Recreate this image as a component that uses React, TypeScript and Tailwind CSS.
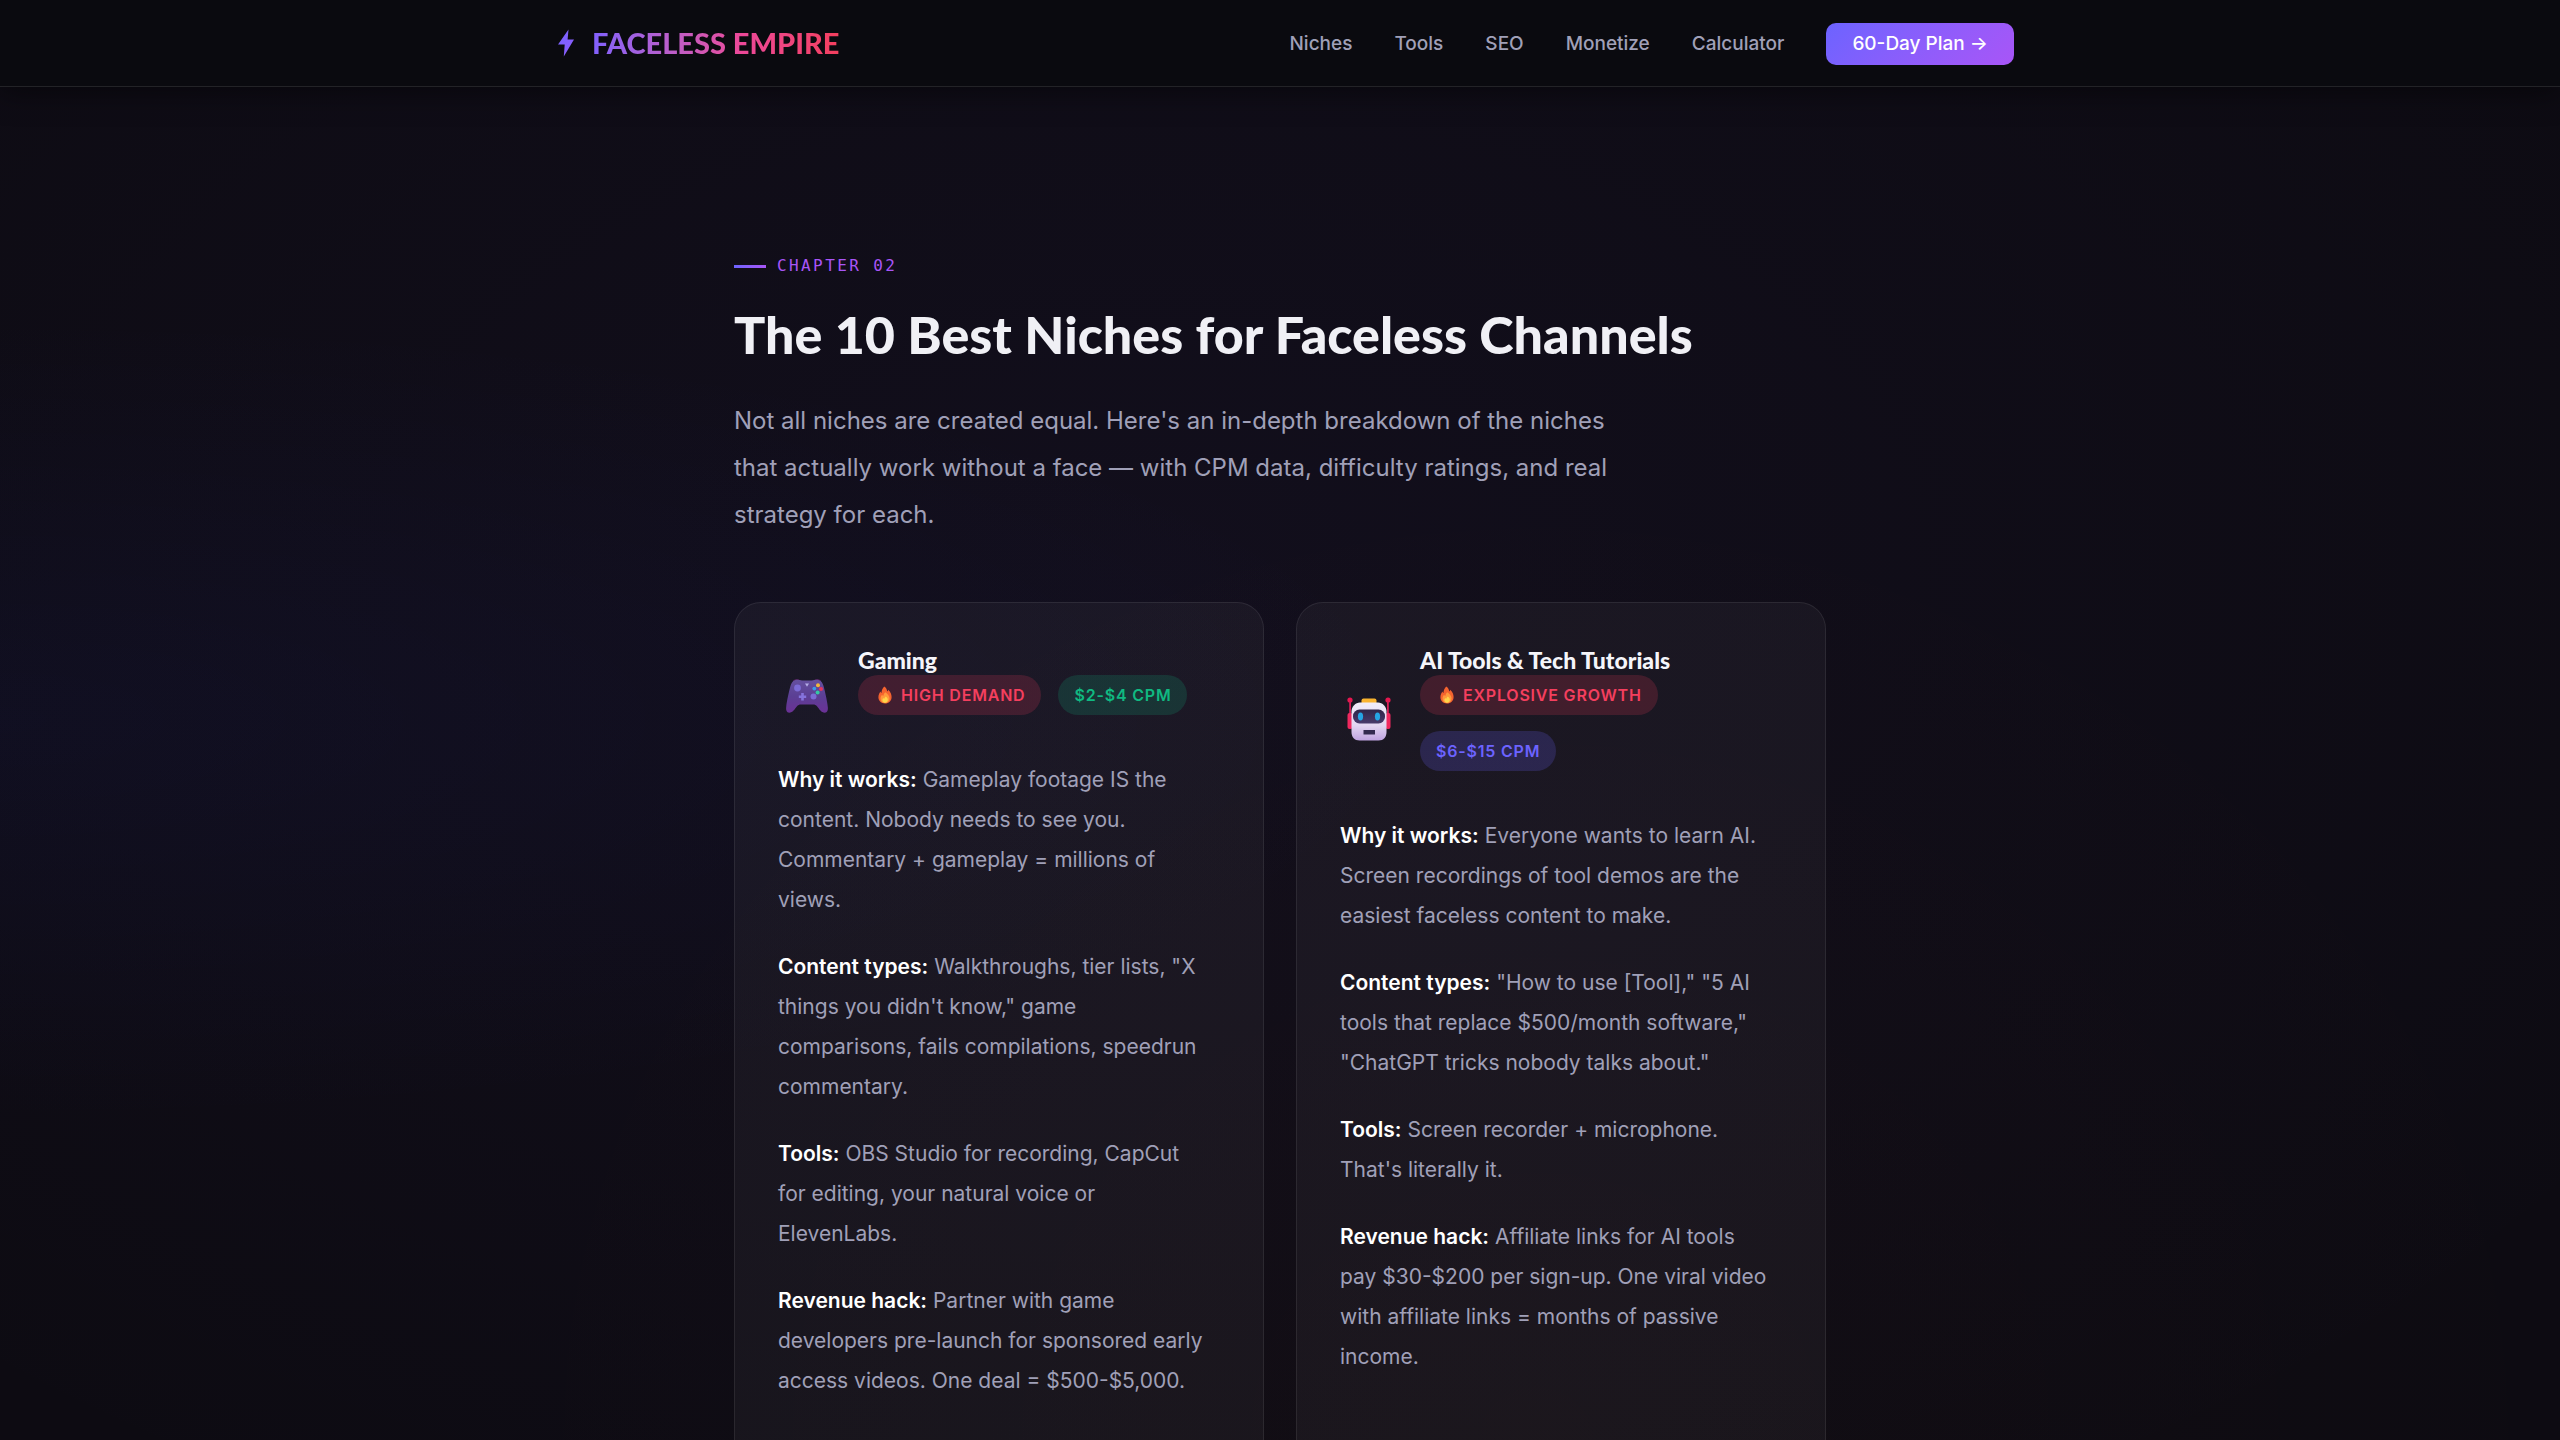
import type { ReactNode } from "react";

interface Badge {
  label: string;
  tone: "red" | "green" | "blue";
  hot?: boolean;
}

interface Niche {
  title: string;
  icon: ReactNode;
  badges: Badge[];
  details: { label: string; text: string }[];
}

const navLinks = ["Niches", "Tools", "SEO", "Monetize", "Calculator"];

const badgeTones = {
  red: "bg-[#f43f5e]/18 text-[#f43f5e]",
  green: "bg-[#10b981]/18 text-[#10b981]",
  blue: "bg-[#6c63ff]/20 text-[#6c63ff]",
};

function BoltIcon() {
  return (
    <svg viewBox="0 0 16 28" className="h-7 w-4" aria-hidden="true">
      <defs>
        <linearGradient id="bolt" x1="0" y1="0" x2="1" y2="1">
          <stop offset="0" stopColor="#7463ff" />
          <stop offset="1" stopColor="#8f5cfb" />
        </linearGradient>
      </defs>
      <path d="M10.5 0.5 9.6 10.6H16L5.8 27.5 6.7 15.6H0z" fill="url(#bolt)" />
    </svg>
  );
}

function FlameIcon() {
  return (
    <svg viewBox="0 0 14 18" className="mx-1 h-[18px] w-[14px]" aria-hidden="true">
      <path
        d="M6.2 0.6C8.4 1.8 8.9 3.6 9.2 5.4c.7-.4.9-1 .9-1.7 2.2 1.9 3.5 4.5 3.5 7.3 0 4-2.9 6.5-6.6 6.5S.4 15 .4 11.3c0-2.5 1-4.2 2-5.8.3.7.5 1.2 1.1 1.6C3.5 4.6 4.4 2.3 6.2.6z"
        fill="#f4632f"
      />
      <path
        d="M7.3 6.2c2.2 1.7 4.3 3.5 4.3 6.4 0 2.7-2 4.5-4.5 4.5s-4.6-1.7-4.6-4.3c0-1.7.8-3 1.6-4 .3.6.6 1 1.2 1.2.2-1.5.9-2.8 2-3.8z"
        fill="#ff9a3c"
      />
      <path
        d="M7.8 10.5c1.2 1 2 1.9 2 3.3 0 1.7-1.2 2.9-2.8 2.9s-2.6-1.2-2.6-2.6c0-.9.4-1.6.9-2.1.3.4.6.6 1 .7.2-.9.7-1.6 1.5-2.2z"
        fill="#ffd54a"
      />
    </svg>
  );
}

function GamepadIcon() {
  return (
    <svg viewBox="0 0 44 44" className="h-11 w-11" aria-hidden="true">
      <defs>
        <linearGradient id="pad" x1="0" y1="0" x2="0" y2="1">
          <stop offset="0" stopColor="#65509f" />
          <stop offset="0.5" stopColor="#5b3f94" />
          <stop offset="1" stopColor="#6b3196" />
        </linearGradient>
      </defs>
      <path d="M8 12c.5-2 6-2.4 7-.6zM29 11.4c1-1.8 6.5-1.4 7 .6z" fill="#5a1e5e" />
      <path
        d="M10 11.2C12 10.5 15 11 17 11.4h10c2-.4 5-.9 7-.2 2.6.8 3.8 3 4.6 6 1.5 5.6 3.6 14.5 4.2 20.8.4 3.4-.6 5.7-3 5.7-3.6 0-5.4-3.5-7.6-6.2-1.2-1.4-2.4-2-4.2-2H16c-1.8 0-3 .6-4.2 2-2.2 2.7-4 6.2-7.6 6.2-2.4 0-3.4-2.3-3-5.7.6-6.3 2.7-15.2 4.2-20.8.8-3 2-5.2 4.6-6z"
        fill="url(#pad)"
      />
      <circle cx="12.5" cy="19" r="3.4" fill="#7c6bd6" />
      <circle cx="28.5" cy="27.5" r="3" fill="#7c6bd6" />
      <path d="M16.2 24h2.6v2.4h2.4V29h-2.4v2.4h-2.6V29h-2.4v-2.6h2.4z" fill="#8573dd" />
      <path d="M20 14.5h4l-2 3.2z" fill="#b6aee8" />
      <circle cx="33" cy="16.2" r="2" fill="#f2b63c" />
      <circle cx="29.3" cy="19.6" r="1.9" fill="#3d9be9" />
      <circle cx="36" cy="20" r="2" fill="#e2375f" />
      <circle cx="32.6" cy="23.5" r="2" fill="#35c7a5" />
    </svg>
  );
}

function RobotIcon() {
  return (
    <svg viewBox="0 0 44 44" className="h-11 w-11" aria-hidden="true">
      <defs>
        <linearGradient id="head" x1="0" y1="0" x2="0" y2="1">
          <stop offset="0" stopColor="#f1ecf8" />
          <stop offset="0.6" stopColor="#e3d6f2" />
          <stop offset="1" stopColor="#bfa3e0" />
        </linearGradient>
        <linearGradient id="visor" x1="0" y1="0" x2="0" y2="1">
          <stop offset="0" stopColor="#2f2548" />
          <stop offset="1" stopColor="#483a6c" />
        </linearGradient>
      </defs>
      <circle cx="3" cy="3" r="2.6" fill="#e5174f" />
      <circle cx="41" cy="3" r="2.6" fill="#e5174f" />
      <path d="M2.2 4h1.8v14H2.2zM40 4h1.8v14H40z" fill="#d61f57" />
      <rect x="0.5" y="16" width="5" height="16" rx="2" fill="#f0285f" />
      <rect x="38.5" y="16" width="5" height="16" rx="2" fill="#f0285f" />
      <rect x="14.5" y="1.5" width="15" height="6" rx="2" fill="#f9b32f" />
      <path
        d="M13 5.5h18c4.5 0 8.5 4 8.5 9V35c0 5-3 8.5-8 8.5h-19c-5 0-8-3.5-8-8.5V14.5c0-5 4-9 8.5-9z"
        fill="url(#head)"
      />
      <rect x="6" y="12.5" width="32" height="14" rx="6.5" fill="url(#visor)" />
      <ellipse cx="13.5" cy="19.5" rx="2.6" ry="4" fill="#25a4e4" />
      <ellipse cx="30.5" cy="19.5" rx="2.6" ry="4" fill="#25a4e4" />
      <rect x="16.5" y="33" width="11.5" height="4.5" fill="#332a50" />
    </svg>
  );
}

const niches: Niche[] = [
  {
    title: "Gaming",
    icon: <GamepadIcon />,
    badges: [
      { label: "High Demand", tone: "red", hot: true },
      { label: "$2-$4 CPM", tone: "green" },
    ],
    details: [
      {
        label: "Why it works:",
        text: "Gameplay footage IS the content. Nobody needs to see you. Commentary + gameplay = millions of views.",
      },
      {
        label: "Content types:",
        text: "Walkthroughs, tier lists, \"X things you didn't know,\" game comparisons, fails compilations, speedrun commentary.",
      },
      {
        label: "Tools:",
        text: "OBS Studio for recording, CapCut for editing, your natural voice or ElevenLabs.",
      },
      {
        label: "Revenue hack:",
        text: "Partner with game developers pre-launch for sponsored early access videos. One deal = $500-$5,000.",
      },
    ],
  },
  {
    title: "AI Tools & Tech Tutorials",
    icon: <RobotIcon />,
    badges: [
      { label: "Explosive Growth", tone: "red", hot: true },
      { label: "$6-$15 CPM", tone: "blue" },
    ],
    details: [
      {
        label: "Why it works:",
        text: "Everyone wants to learn AI. Screen recordings of tool demos are the easiest faceless content to make.",
      },
      {
        label: "Content types:",
        text: "\"How to use [Tool],\" \"5 AI tools that replace $500/month software,\" \"ChatGPT tricks nobody talks about.\"",
      },
      {
        label: "Tools:",
        text: "Screen recorder + microphone. That's literally it.",
      },
      {
        label: "Revenue hack:",
        text: "Affiliate links for AI tools pay $30-$200 per sign-up. One viral video with affiliate links = months of passive income.",
      },
    ],
  },
];

function NavBar() {
  return (
    <header className="border-b border-white/10 bg-[#0a0a0f] shadow-[0_4px_30px_rgba(0,0,0,0.5)]">
      <nav className="mx-auto flex h-[86px] max-w-[1500px] items-center justify-between px-4">
        <a href="#top" className="flex items-center gap-[18px] pl-3">
          <BoltIcon />
          <span className="bg-linear-to-r from-[#8160fd] via-[#ec4899] via-60% to-[#f43f5e] bg-clip-text font-['Lato',sans-serif] text-[29px] leading-9 font-black text-transparent">
            FACELESS EMPIRE
          </span>
        </a>
        <div className="flex items-center gap-[42px] pt-[2px] text-[19px] font-medium text-[#a0a0b8]">
          {navLinks.map((link) => (
            <a key={link} href={`#${link.toLowerCase()}`}>
              {link}
            </a>
          ))}
          <a
            href="#plan"
            className="rounded-[10px] bg-linear-135 from-[#6c63ff] to-[#a855f7] px-[26px] py-2 leading-[26px] text-white"
          >
            60-Day Plan →
          </a>
        </div>
      </nav>
    </header>
  );
}

function NicheCard({ niche }: { niche: Niche }) {
  return (
    <article className="rounded-[27px] border border-white/8 bg-white/4 p-[43px] pb-[70px]">
      <div className="mb-6 flex items-center gap-[22px]">
        <div className="flex w-[58px] shrink-0 justify-center">{niche.icon}</div>
        <div className="pb-[21px]">
          <h3 className="font-['Lato',sans-serif] text-[23px] leading-[29px] font-black text-[#f5f5fa]">
            {niche.title}
          </h3>
          <div className="flex flex-wrap gap-x-[17px] gap-y-4">
            {niche.badges.map((badge) => (
              <span
                key={badge.label}
                className={`flex h-10 items-center gap-[5px] rounded-full px-4 text-base font-semibold tracking-wider uppercase ${badgeTones[badge.tone]}`}
              >
                {badge.hot && <FlameIcon />}
                {badge.label}
              </span>
            ))}
          </div>
        </div>
      </div>
      <div className="flex flex-col gap-[27px] pr-3 text-[21px] leading-10 text-[#a0a0b8]">
        {niche.details.map((detail) => (
          <p key={detail.label}>
            <strong className="font-semibold text-white">{detail.label}</strong> {detail.text}
          </p>
        ))}
      </div>
    </article>
  );
}

export default function App() {
  return (
    <div
      id="top"
      className="h-screen overflow-hidden bg-[#0d0b12] bg-[radial-gradient(ellipse_at_0%_50%,rgba(50,70,255,0.05),transparent_40%),radial-gradient(ellipse_at_45%_40%,rgba(110,80,220,0.05),transparent_90%),radial-gradient(ellipse_at_60%_100%,rgba(249,115,22,0.02),transparent_50%)] font-['Inter',sans-serif] text-white"
    >
      <NavBar />
      <main className="mx-auto max-w-[1140px] px-6 pt-[166px]">
        <div className="flex items-center gap-[11px] font-['DejaVu_Sans_Mono',monospace] text-base leading-[26px] tracking-[0.15em] text-[#a855f7] uppercase">
          <span className="h-[3px] w-8 bg-linear-to-r from-[#6c63ff] to-[#a855f7]" />
          Chapter 02
        </div>
        <h1 className="mt-6 font-['Lato',sans-serif] text-[52px] leading-[62px] font-black text-[#f0f0f5]">
          The 10 Best Niches for Faceless Channels
        </h1>
        <p className="mt-8 max-w-[920px] text-[24px] leading-[47px] text-[#a0a0b8]">
          Not all niches are created equal. Here's an in-depth breakdown of the niches that actually work without a
          face — with CPM data, difficulty ratings, and real strategy for each.
        </p>
        <section className="mt-16 grid grid-cols-2 gap-8">
          {niches.map((niche) => (
            <NicheCard key={niche.title} niche={niche} />
          ))}
        </section>
      </main>
    </div>
  );
}
